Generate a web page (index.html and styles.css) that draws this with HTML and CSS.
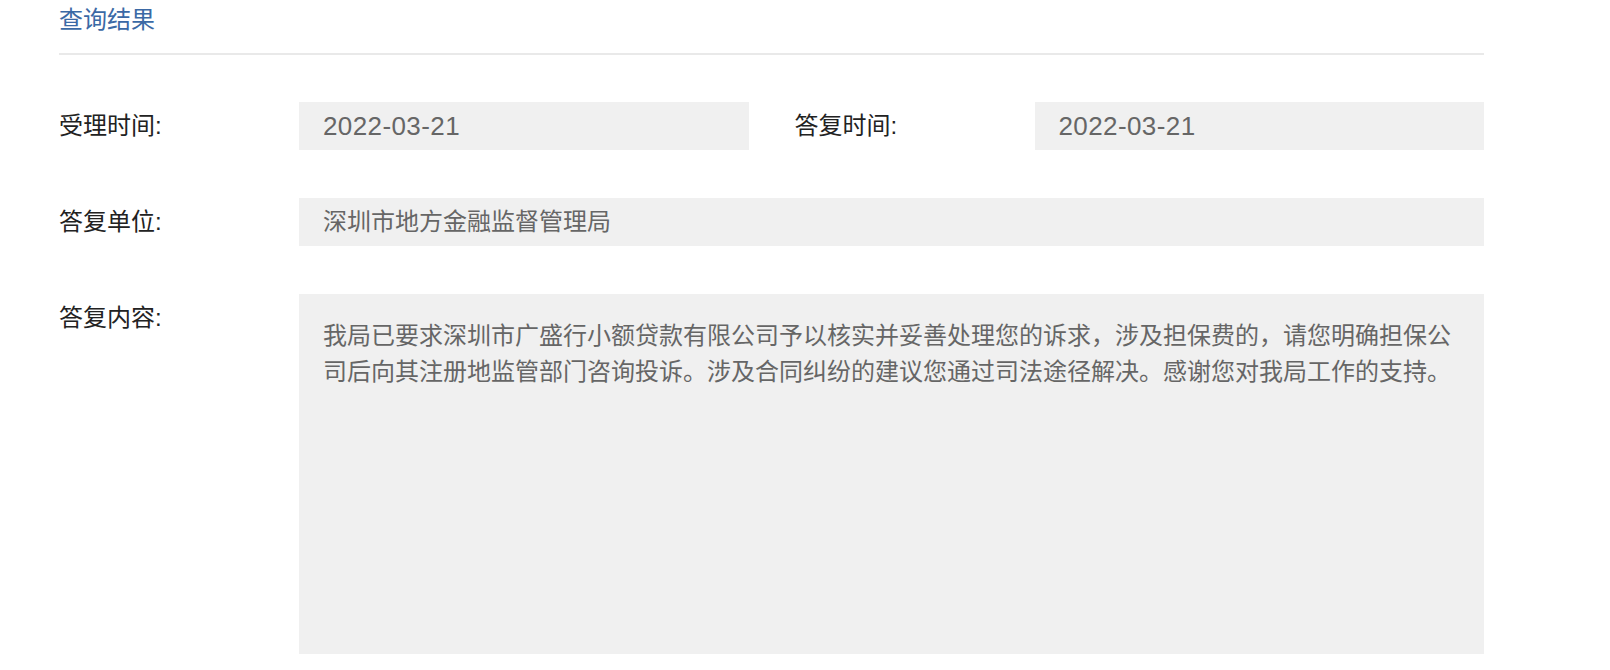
FILE: index.html
```html
<!DOCTYPE html>
<html lang="zh-CN">
<head>
  <meta charset="UTF-8" />
  <meta name="viewport" content="width=device-width, initial-scale=1.0"/>
  <title>查询结果</title>
  <link rel="stylesheet" href="styles.css">
</head>
<body>

  <main class="result">
    <h2 class="result-title">查询结果</h2>

    <div class="form-row">
      <div class="field half">
        <span class="label">受理时间:</span>
        <div class="value date">2022-03-21</div>
      </div>
      <div class="field half">
        <span class="label">答复时间:</span>
        <div class="value date">2022-03-21</div>
      </div>
    </div>

    <div class="form-row">
      <div class="field">
        <span class="label">答复单位:</span>
        <div class="value">深圳市地方金融监督管理局</div>
      </div>
    </div>

    <div class="form-row">
      <div class="field">
        <span class="label">答复内容:</span>
        <div class="value content">我局已要求深圳市广盛行小额贷款有限公司予以核实并妥善处理您的诉求，涉及担保费的，请您明确担保公司后向其注册地监管部门咨询投诉。涉及合同纠纷的建议您通过司法途径解决。感谢您对我局工作的支持。</div>
      </div>
    </div>
  </main>

</body>
</html>
```

FILE: styles.css
```css
body {
  margin: 0;
  background: #fff;
  font-family: "Liberation Sans", "Noto Sans CJK SC", sans-serif;
  font-size: 24px;
  color: #222;
}

.result {
  width: 1425px;
  margin-left: 59px;
}

.result-title {
  margin: 0;
  font-size: 24px;
  font-weight: normal;
  line-height: 40px;
  color: #3b69a5;
  padding-bottom: 13px;
  border-bottom: 2px solid #e9e9e9;
  margin-bottom: 47px;
}

.form-row {
  display: flex;
  gap: 46px;
  margin-bottom: 48px;
}

.field {
  display: flex;
  flex: 1;
  align-items: flex-start;
}

.label {
  flex: 0 0 240px;
  line-height: 48px;
}

.value {
  flex: 1;
  background: #f0f0f0;
  color: #666;
  height: 48px;
  line-height: 48px;
  padding: 0 24px;
}

.value.date {
  font-size: 26px;
  letter-spacing: 0.4px;
}

.value.content {
  height: 360px;
  box-sizing: border-box;
  line-height: 36px;
  padding: 24px 24px;
}
```
